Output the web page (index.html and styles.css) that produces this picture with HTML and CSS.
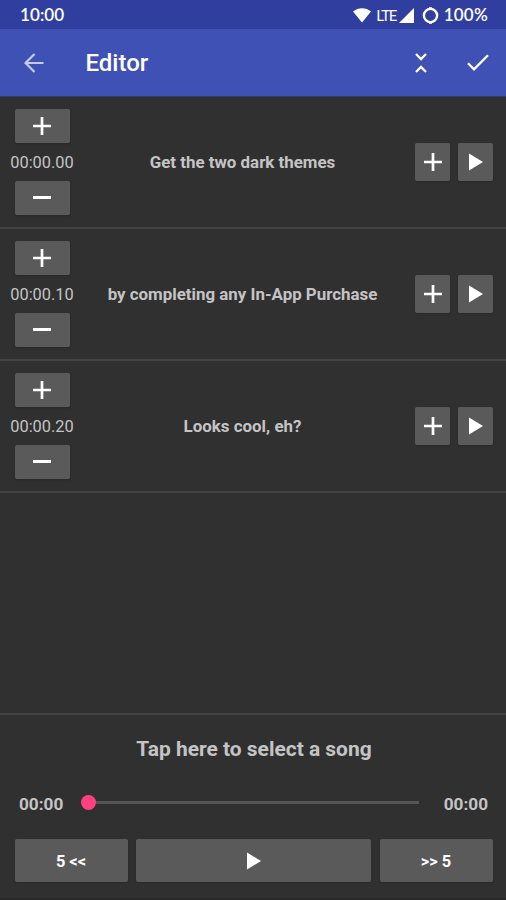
FILE: index.html
```html
<!DOCTYPE html>
<html lang="en">
<head>
<meta charset="utf-8">
<title>Editor</title>
<link rel="stylesheet" href="styles.css">
</head>
<body>
<svg width="0" height="0" class="defs">
  <symbol id="plus" viewBox="0 0 18 18"><path d="M9 0v18M0 9h18" stroke="currentColor" stroke-width="2.7"/></symbol>
  <symbol id="minus" viewBox="0 0 18 18"><path d="M0 8.5h18" stroke="currentColor" stroke-width="3"/></symbol>
  <symbol id="play" viewBox="0 0 14 18"><path d="M0 0.5v17L14 9z" fill="currentColor"/></symbol>
</svg>
<div class="screen">
  <header class="status">
    <span class="clock">10:00</span>
    <svg class="wifi" width="18" height="15" viewBox="0 0 18 15"><path d="M0 3.6C5 -.9 13 -.9 18 3.6L9 14.6z" fill="currentColor"/></svg>
    <span class="lte">LTE</span>
    <svg class="signal" width="15" height="15" viewBox="0 0 15 15"><path d="M15 0v15H0z" fill="currentColor"/></svg>
    <svg class="ring" width="17" height="17" viewBox="0 0 17 17"><circle cx="8.5" cy="8.5" r="6.6" fill="none" stroke="currentColor" stroke-width="2.4"/><path d="M8.5 .3v2M8.5 14.7v2" stroke="currentColor" stroke-width="3"/></svg>
    <span class="battery">100%</span>
  </header>
  <nav class="toolbar">
    <svg class="back" width="20" height="20" viewBox="0 0 20 20"><path d="M19.5 10H1.5M10.5 1L1.5 10l9 9" fill="none" stroke="currentColor" stroke-width="2.2"/></svg>
    <h1>Editor</h1>
    <svg class="collapse" width="12" height="20" viewBox="0 0 12 20"><path d="M1 1l5 5 5-5M1 19l5-5 5 5" fill="none" stroke="currentColor" stroke-width="2.3"/></svg>
    <svg class="check" width="22" height="17" viewBox="0 0 22 17"><path d="M1 9.3l6 6L21 1.2" fill="none" stroke="currentColor" stroke-width="2.3"/></svg>
  </nav>
  <main>
    <section class="row">
      <div class="time"><button><svg><use href="#plus"/></svg></button><span>00:00.00</span><button><svg><use href="#minus"/></svg></button></div>
      <p class="lyric">Get the two dark themes</p>
      <div class="actions"><button><svg><use href="#plus"/></svg></button><button><svg class="tri"><use href="#play"/></svg></button></div>
    </section>
    <section class="row">
      <div class="time"><button><svg><use href="#plus"/></svg></button><span>00:00.10</span><button><svg><use href="#minus"/></svg></button></div>
      <p class="lyric">by completing any In-App Purchase</p>
      <div class="actions"><button><svg><use href="#plus"/></svg></button><button><svg class="tri"><use href="#play"/></svg></button></div>
    </section>
    <section class="row">
      <div class="time"><button><svg><use href="#plus"/></svg></button><span>00:00.20</span><button><svg><use href="#minus"/></svg></button></div>
      <p class="lyric">Looks cool, eh?</p>
      <div class="actions"><button><svg><use href="#plus"/></svg></button><button><svg class="tri"><use href="#play"/></svg></button></div>
    </section>
  </main>
  <footer class="player">
    <p class="song">Tap here to select a song</p>
    <div class="seek"><span>00:00</span><div class="track"><i></i></div><span>00:00</span></div>
    <div class="controls"><button>5 &lt;&lt;</button><button><svg class="tri"><use href="#play"/></svg></button><button>&gt;&gt; 5</button></div>
  </footer>
</div>
</body>
</html>
```

FILE: styles.css
```css
* { box-sizing: border-box; }
body { margin: 0; background: #303030; font-family: Roboto, sans-serif; color: #c4c4c4; }
h1, p { margin: 0; }
.defs { display: none; }
svg { display: block; flex: none; }
.screen { width: 506px; height: 900px; display: flex; flex-direction: column; overflow: hidden; border-bottom: 2px solid #292929; }
.status { height: 29px; flex: none; display: flex; align-items: center; padding: 1px 18px 0 20px; background: #303f9f; color: #fff; font: 600 17px/28px Lato, sans-serif; }
.clock { flex: 1; letter-spacing: 0.1px; }
.wifi { margin-right: 5px; }
.lte { font-weight: 400; font-size: 15px; letter-spacing: -1.2px; width: 22.5px; white-space: nowrap; }
.ring { margin: 0 5px 0 8px; }
.battery { letter-spacing: 0.25px; }
.toolbar { height: 68px; flex: none; display: flex; align-items: center; padding: 0 17px 0 24px; background: #3f51b5; color: #fff; border-bottom: 1px solid #353b70; }
.back { color: #c5cbe9; }
.toolbar h1 { flex: 1; margin-left: 41.5px; padding-top: 1px; font-size: 24px; font-weight: 500; line-height: 30px; }
.collapse { margin-right: 40px; }
button { display: flex; align-items: center; justify-content: center; border: 0; border-radius: 2px; padding: 0; background: #5a5a5b; color: #fff; font: 700 16px Roboto, sans-serif; box-shadow: 0 1px 2px #00000028; }
button svg { width: 18px; height: 18px; }
button .tri { width: 14px; height: 18px; margin-left: 1px; }
main { flex: 1; }
.row { height: 132px; display: flex; align-items: center; border-bottom: 2px solid #434343; padding: 0 13px 1px 0; }
.time { width: 84px; display: flex; flex-direction: column; align-items: center; }
.time button { width: 55px; height: 34px; }
.time span { font-size: 16.4px; line-height: 36px; padding-top: 2px; }
.lyric { flex: 1; text-align: center; font-size: 16.9px; font-weight: 700; line-height: 24px; }
.actions { display: flex; gap: 8px; margin-left: 14px; }
.actions button { width: 35px; height: 38px; }
.player { height: 185px; border-top: 2px solid #434343; }
.song { margin-top: 19px; text-align: center; font-size: 20.95px; font-weight: 700; line-height: 30px; padding-left: 2px; }
.seek { display: flex; align-items: center; margin-top: 26px; padding: 0 18px 0 19px; height: 28px; font-size: 17.2px; font-weight: 700; }
.track { flex: 1; height: 3px; background: #555; margin: 0 25px 3px 24px; position: relative; }
.track i { position: absolute; left: -6px; top: -6px; width: 15px; height: 15px; border-radius: 50%; background: #ff4081; }
.controls { display: grid; grid-template-columns: 113px 235px 113px; gap: 8.5px; margin: 20.5px 13px 0 14.5px; }
.controls button { height: 43px; padding-top: 2px; font-size: 16.4px; }
.controls .tri { margin: 0 0 1px 1px; }
```
